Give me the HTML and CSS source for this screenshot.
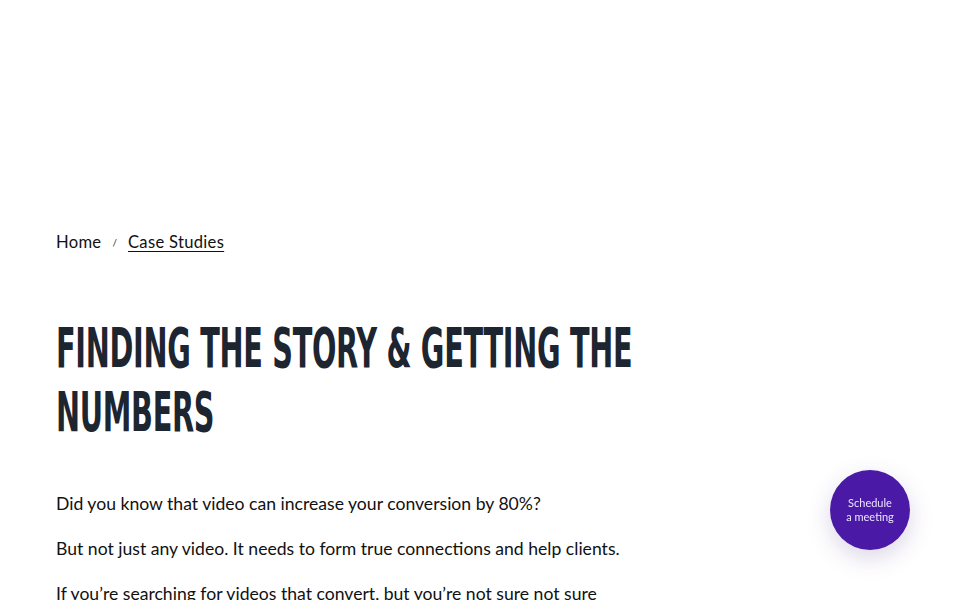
FILE: index.html
```html
<!DOCTYPE html>
<html lang="en">
<head>
<meta charset="utf-8">
<title>Finding the Story &amp; Getting the Numbers</title>
<link rel="stylesheet" href="styles.css">
</head>
<body>
<header class="site-header"></header>
<main class="content">
  <nav class="breadcrumb">
    <a class="crumb" href="#">Home</a>
    <span class="sep">/</span>
    <a class="crumb current" href="#">Case Studies</a>
  </nav>
  <div class="title-wrap">
    <h1 class="title">Finding the story &amp; getting the numbers</h1>
  </div>
  <div class="body">
    <p>Did you know that video can increase your conversion by 80%?</p>
    <p>But not just any video. It needs to form true connections and help clients.</p>
    <p>If you’re searching for videos that convert, but you’re not sure not sure</p>
  </div>
</main>
<a class="schedule" href="#">Schedule<br>a meeting</a>
</body>
</html>
```
FILE: styles.css
```css
html, body {
  margin: 0;
  padding: 0;
  background: #fff;
  overflow: hidden;
}
body {
  font-family: "Lato", "Inter", sans-serif;
  color: #111;
}
.site-header {
  height: 224px;
}
.content {
  padding: 0 56px;
}
.breadcrumb {
  display: flex;
  align-items: center;
  gap: 11px;
  font-size: 16.6px;
  line-height: 36px;
  height: 36px;
}
.crumb {
  color: #111;
  text-decoration: none;
  letter-spacing: 0.3px;
}
.crumb.current {
  text-decoration: underline;
  text-underline-offset: 3px;
}
.sep {
  font-size: 10px;
  color: #333;
}
.title-wrap {
  margin-top: 56px;
  height: 128px;
}
.title {
  margin: 0;
  font-family: "DejaVu Sans Condensed", sans-serif;
  font-weight: 700;
  text-transform: uppercase;
  font-size: 56px;
  line-height: 64px;
  color: #1d2530;
  letter-spacing: -0.5px;
  width: 1100px;
  transform: scaleX(0.57);
  transform-origin: 0 0;
}
.body {
  margin-top: 37px;
  font-size: 17.6px;
}
.body p {
  margin: 0;
  line-height: 45px;
}
.schedule {
  position: fixed;
  left: 830px;
  top: 470px;
  width: 80px;
  height: 80px;
  border-radius: 50%;
  background: #4a1aa6;
  color: #ece4ff;
  font-size: 11px;
  line-height: 14px;
  text-decoration: none;
  display: flex;
  align-items: center;
  justify-content: center;
  text-align: center;
  box-shadow: 0 8px 24px rgba(60, 30, 120, 0.18);
}
```
